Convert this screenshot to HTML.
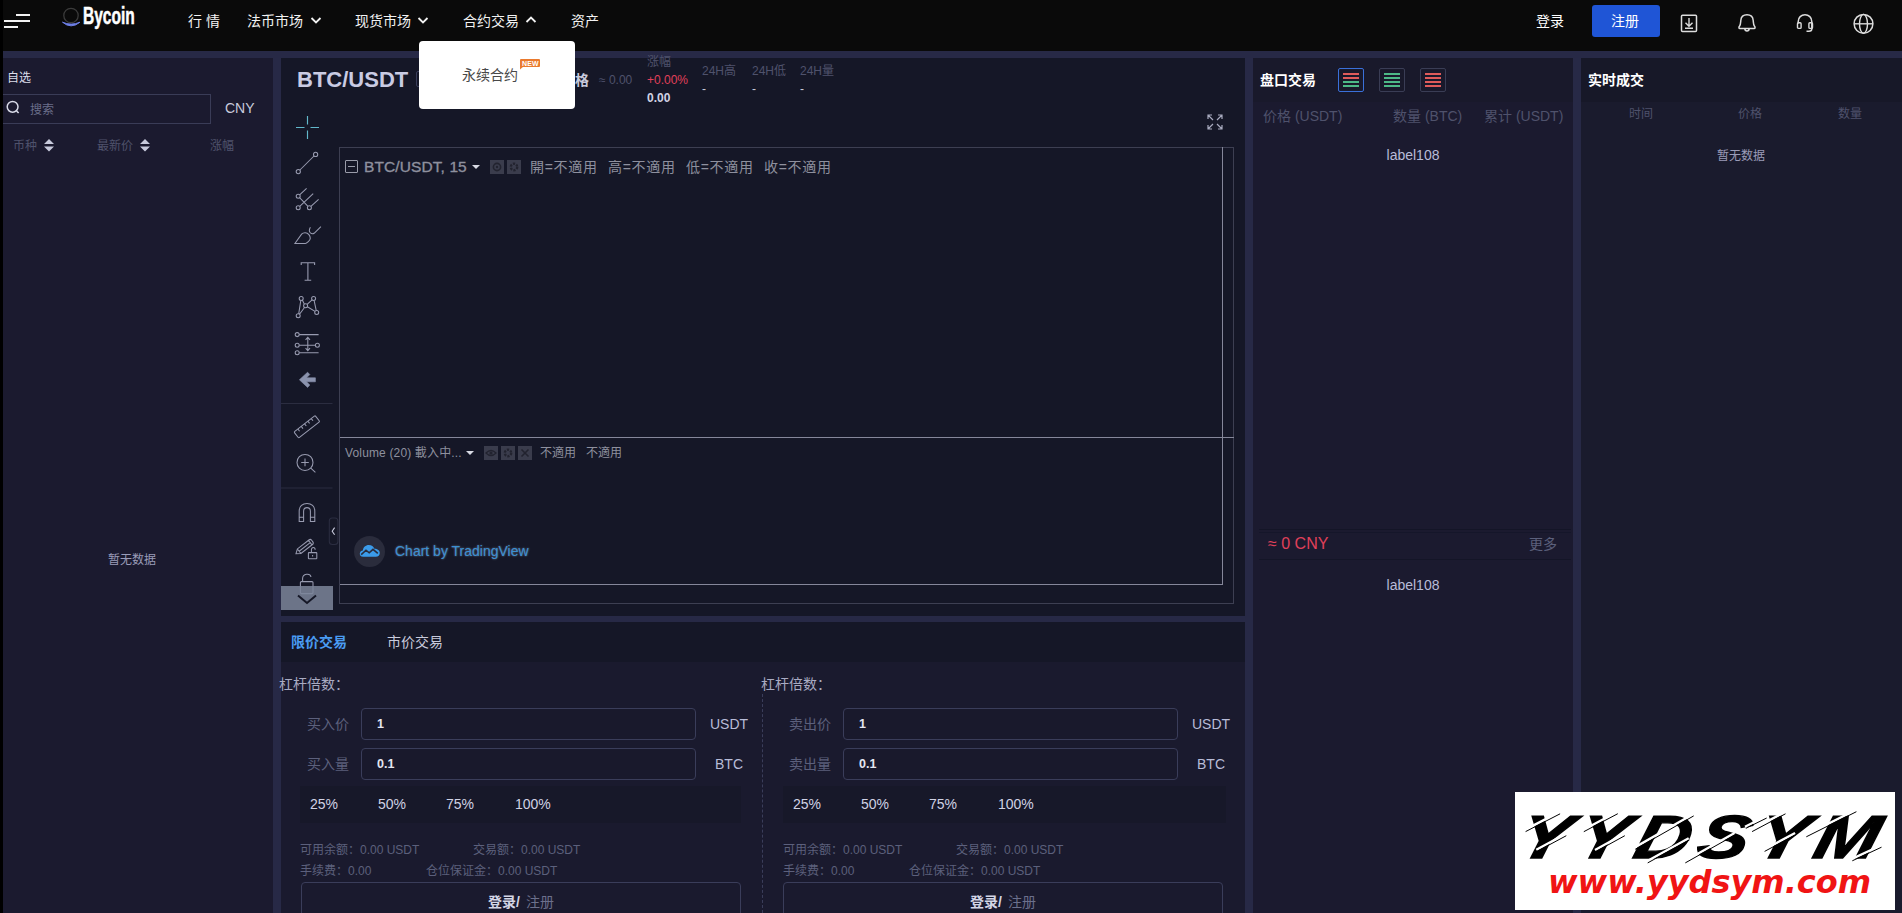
<!DOCTYPE html>
<html lang="zh-CN">
<head>
<meta charset="utf-8">
<title>Bycoin</title>
<style>
*{box-sizing:border-box;margin:0;padding:0}
html,body{width:1902px;height:913px;overflow:hidden;background:#272946}
body{position:relative;font-family:"Liberation Sans","Noto Sans CJK SC",sans-serif;font-size:12px;color:#c8cadc}
.a{position:absolute;white-space:nowrap}
.t{position:absolute;white-space:nowrap;line-height:20px;height:20px}
.p{position:absolute}
.b{font-weight:bold}
.f14{font-size:14px}
.f12{font-size:12px}
.dim{color:#4f526c}
.mid{color:#5c607c}
svg{position:absolute;overflow:visible}
/* panels */
#strip{left:0;top:0;width:3px;height:913px;background:#000}
#nav{left:3px;top:0;width:1899px;height:51px;background:#0a0a0a}
#left{left:3px;top:58px;width:270px;height:855px;background:#1b1a2f}
#cen{left:281px;top:58px;width:964px;height:558px;background:#151727}
#trade{left:281px;top:622px;width:964px;height:291px;background:#1a1a2e}
#tabs{left:281px;top:622px;width:964px;height:40px;background:#151727}
#ob{left:1253px;top:58px;width:320px;height:855px;background:#1b1a2f}
#rt{left:1581px;top:58px;width:321px;height:855px;background:#1a1b2d}
#rth{left:1581px;top:58px;width:321px;height:44px;background:#171828}
.inp{position:absolute;height:32px;width:335px;border:1px solid #3a3d5a;border-radius:4px;background:#19192c}
.pbar{position:absolute;height:37px;width:441px;background:#171829}
.lbtn{position:absolute;height:40px;width:440px;border:1px solid #3a3d5a;border-radius:4px}
</style>
</head>
<body>
<div class="p" id="nav"></div>
<div class="p" id="strip"></div>
<div class="p" id="left"></div>
<div class="p" id="cen"></div>
<div class="p" id="trade"></div>
<div class="p" id="tabs"></div>
<div class="p" id="ob"></div>
<div class="p" id="rt"></div>
<div class="p" id="rth"></div>
<div class="p" style="left:1253px;top:58px;width:320px;height:44px;background:#19192b"></div>

<!--NAV-->
<div class="p" style="left:16px;top:14px;width:14px;height:2px;background:#f2f2f2"></div>
<div class="p" style="left:4px;top:20px;width:26px;height:2px;background:#f2f2f2"></div>
<div class="p" style="left:4px;top:26px;width:14px;height:2px;background:#f2f2f2"></div>
<svg style="left:60px;top:5px" width="24" height="24" viewBox="0 0 24 24"><circle cx="11" cy="10.5" r="7.2" fill="none" stroke="#3b3b3b" stroke-width="1.3"/><path d="M2.5 17.2 Q11 24.5 20 17.2 Q11 21 2.5 17.2Z" fill="#6d7fe6" stroke="#6d7fe6" stroke-width="1"/></svg>
<div class="a b" style="left:82.5px;top:3px;font-size:23px;line-height:26px;color:#fff;-webkit-text-stroke:.5px #fff;transform:scaleX(.675);transform-origin:0 0">Bycoin</div>
<div class="t f14" style="left:188px;top:11px;color:#f2f2f2">行 情</div>
<div class="t f14" style="left:247px;top:11px;color:#f2f2f2">法币市场</div>
<svg style="left:310px;top:16px" width="12" height="9" viewBox="0 0 12 9"><path d="M1.5 2 L6 6.5 L10.5 2" fill="none" stroke="#f2f2f2" stroke-width="1.8"/></svg>
<div class="t f14" style="left:355px;top:11px;color:#f2f2f2">现货市场</div>
<svg style="left:417px;top:16px" width="12" height="9" viewBox="0 0 12 9"><path d="M1.5 2 L6 6.5 L10.5 2" fill="none" stroke="#f2f2f2" stroke-width="1.8"/></svg>
<div class="t f14" style="left:463px;top:11px;color:#f2f2f2">合约交易</div>
<svg style="left:525px;top:15px" width="12" height="9" viewBox="0 0 12 9"><path d="M1.5 7 L6 2.5 L10.5 7" fill="none" stroke="#f2f2f2" stroke-width="1.8"/></svg>
<div class="t f14" style="left:571px;top:11px;color:#f2f2f2">资产</div>
<div class="t f14" style="left:1536px;top:11px;color:#fff">登录</div>
<div class="p" style="left:1592px;top:5px;width:68px;height:32px;background:#1f55d6;border-radius:3px"></div>
<div class="t f14" style="left:1611px;top:11px;color:#fff">注册</div>
<svg style="left:1680px;top:14px" width="18" height="19" viewBox="0 0 18 19"><rect x="1.5" y="1.2" width="15" height="16.2" rx="1" fill="none" stroke="#dcdcdc" stroke-width="1.5"/><path d="M9 4 V12 M5.5 8.8 L9 12.3 L12.5 8.8 M5 14.3 H13" fill="none" stroke="#dcdcdc" stroke-width="1.4"/></svg>
<svg style="left:1737px;top:13px" width="20" height="20" viewBox="0 0 20 20"><path d="M3 15.5 C1.5 15.5 1.8 14 2.6 13 C3.6 11.6 3.6 10 3.8 7.5 C4.1 3.6 6.8 1.8 10 1.8 C13.2 1.8 15.9 3.6 16.2 7.5 C16.4 10 16.4 11.6 17.4 13 C18.2 14 18.5 15.5 17 15.5 Z M7.8 15.8 C8 17.3 9 17.9 10 17.9 C11 17.9 12 17.3 12.2 15.8" fill="none" stroke="#dcdcdc" stroke-width="1.5"/></svg>
<svg style="left:1795px;top:13px" width="20" height="20" viewBox="0 0 20 20"><path d="M3.2 10.5 V8.5 C3.2 4.5 6.2 1.8 10 1.8 C13.8 1.8 16.8 4.5 16.8 8.5 V16 C16.8 17.6 15.5 18.2 14 18.2 H11.5" fill="none" stroke="#dcdcdc" stroke-width="1.5"/><rect x="2.5" y="9.8" width="3.6" height="5.6" rx="1" fill="none" stroke="#dcdcdc" stroke-width="1.4"/><rect x="13.9" y="9.8" width="3.6" height="5.6" rx="1" fill="none" stroke="#dcdcdc" stroke-width="1.4"/></svg>
<svg style="left:1852px;top:12px" width="24" height="24" viewBox="0 0 24 24"><circle cx="11.5" cy="11.8" r="9.4" fill="none" stroke="#dcdcdc" stroke-width="1.5"/><ellipse cx="11.5" cy="11.8" rx="4" ry="9.4" fill="none" stroke="#dcdcdc" stroke-width="1.4"/><path d="M2.1 11.8 H20.9" stroke="#dcdcdc" stroke-width="1.4"/></svg>
<!--LEFT-->
<div class="t f12" style="left:7px;top:68px;color:#dcdeea">自选</div>
<div class="p" style="left:3px;top:94px;width:208px;height:30px;border:1px solid #3a3c57;border-left:none"></div>
<svg style="left:5px;top:99px" width="18" height="18" viewBox="0 0 18 18"><circle cx="7.6" cy="7.8" r="5.4" fill="none" stroke="#d8dae8" stroke-width="1.5"/><path d="M11.6 12 L13.6 14" stroke="#d8dae8" stroke-width="1.6"/></svg>
<div class="t f12" style="left:30px;top:100px;color:#6a6e8a">搜索</div>
<div class="t f14" style="left:225px;top:98px;color:#c8cadc">CNY</div>
<div class="t f12 dim" style="left:13px;top:136px">币种</div>
<svg style="left:43px;top:139px" width="12" height="13" viewBox="0 0 12 13"><path d="M1 5 L6 0 L11 5Z M1 7.5 L6 12.5 L11 7.5Z" fill="#c8cadc"/></svg>
<div class="t f12 dim" style="left:97px;top:136px">最新价</div>
<svg style="left:139px;top:139px" width="12" height="13" viewBox="0 0 12 13"><path d="M1 5 L6 0 L11 5Z M1 7.5 L6 12.5 L11 7.5Z" fill="#c8cadc"/></svg>
<div class="t f12 dim" style="left:210px;top:136px">涨幅</div>
<div class="t f12" style="left:108px;top:550px;color:#9a9cb8">暂无数据</div>
<!--CENTER-->
<div class="a b" style="left:297px;top:67px;font-size:22px;line-height:26px;color:#c9cbe3">BTC/USDT</div>
<div class="p" style="left:416px;top:71px;width:30px;height:16px;border:1px solid #3a3d5a;border-radius:2px"></div>
<div class="t f14 b" style="left:533px;top:70px;color:#c8cadc">最新价格</div>
<div class="t f12 dim" style="left:599px;top:70px">≈ 0.00</div>
<div class="t f12 dim" style="left:647px;top:52px">涨幅</div>
<div class="t f12" style="left:647px;top:70px;color:#e0405a">+0.00%</div>
<div class="t f12 b" style="left:647px;top:88px;color:#d0d2e4">0.00</div>
<div class="t f12 dim" style="left:702px;top:61px">24H高</div>
<div class="t f12 dim" style="left:752px;top:61px">24H低</div>
<div class="t f12 dim" style="left:800px;top:61px">24H量</div>
<div class="t f12" style="left:702px;top:79px;color:#c8cadc">-</div>
<div class="t f12" style="left:752px;top:79px;color:#c8cadc">-</div>
<div class="t f12" style="left:800px;top:79px;color:#c8cadc">-</div>
<!-- fullscreen -->
<svg style="left:1207px;top:114px" width="16" height="16" viewBox="0 0 16 16"><path d="M1 5 V1 H5 M1 1 L6 6 M11 1 H15 V5 M15 1 L10 6 M1 11 V15 H5 M1 15 L6 10 M15 11 V15 H11 M15 15 L10 10" fill="none" stroke="#a9abc0" stroke-width="1.2"/></svg>
<!-- chart frame -->
<div class="p" style="left:339px;top:147px;width:895px;height:457px;border:1px solid #3d3f52"></div>
<div class="p" style="left:1222px;top:147px;width:1px;height:438px;background:#85879a"></div>
<div class="p" style="left:340px;top:437px;width:894px;height:1px;background:#85879a"></div>
<div class="p" style="left:340px;top:584px;width:883px;height:1px;background:#85879a"></div>
<!-- legend row -->
<div class="p" style="left:345px;top:160px;width:13px;height:13px;border:1px solid #9a9caa;border-radius:1px"></div>
<div class="p" style="left:348px;top:166px;width:7px;height:1px;background:#9a9caa"></div>
<div class="a" style="left:364px;top:157px;font-size:15.5px;line-height:20px;color:#8e909e;-webkit-text-stroke:.35px #8e909e;letter-spacing:.1px">BTC/USDT, 15</div>
<svg style="left:471px;top:164px" width="10" height="6" viewBox="0 0 10 6"><path d="M1 1 H9 L5 5Z" fill="#d8dae4"/></svg>
<div class="p" style="left:490px;top:160px;width:14px;height:14px;background:#3a3c4c"></div>
<svg style="left:490px;top:160px" width="14" height="14" viewBox="0 0 14 14"><circle cx="7" cy="7" r="3.6" fill="none" stroke="#22232f" stroke-width="1.6"/><circle cx="7" cy="7" r="1.2" fill="#22232f"/></svg>
<div class="p" style="left:507px;top:160px;width:14px;height:14px;background:#3a3c4c"></div>
<svg style="left:507px;top:160px" width="14" height="14" viewBox="0 0 14 14"><circle cx="7" cy="7" r="3.2" fill="none" stroke="#22232f" stroke-width="2.4" stroke-dasharray="2.2 1.2"/></svg>
<div class="t f14" style="left:530px;top:157px;color:#8e909e;letter-spacing:.7px">開=不適用</div>
<div class="t f14" style="left:608px;top:157px;color:#8e909e;letter-spacing:.7px">高=不適用</div>
<div class="t f14" style="left:686px;top:157px;color:#8e909e;letter-spacing:.7px">低=不適用</div>
<div class="t f14" style="left:764px;top:157px;color:#8e909e;letter-spacing:.7px">收=不適用</div>
<!-- volume row -->
<div class="t f12" style="left:345px;top:443px;color:#8e909e;letter-spacing:.15px">Volume (20) 載入中...</div>
<svg style="left:465px;top:450px" width="10" height="6" viewBox="0 0 10 6"><path d="M1 1 H9 L5 5Z" fill="#d8dae4"/></svg>
<div class="p" style="left:484px;top:446px;width:14px;height:14px;background:#3a3c4c"></div>
<svg style="left:484px;top:446px" width="14" height="14" viewBox="0 0 14 14"><path d="M2 7 Q7 2 12 7 Q7 12 2 7Z" fill="none" stroke="#22232f" stroke-width="1.3"/><circle cx="7" cy="7" r="1.6" fill="#22232f"/></svg>
<div class="p" style="left:501px;top:446px;width:14px;height:14px;background:#3a3c4c"></div>
<svg style="left:501px;top:446px" width="14" height="14" viewBox="0 0 14 14"><circle cx="7" cy="7" r="3.2" fill="none" stroke="#22232f" stroke-width="2.4" stroke-dasharray="2.2 1.2"/></svg>
<div class="p" style="left:518px;top:446px;width:14px;height:14px;background:#3a3c4c"></div>
<svg style="left:518px;top:446px" width="14" height="14" viewBox="0 0 14 14"><path d="M3.5 3.5 L10.5 10.5 M10.5 3.5 L3.5 10.5" stroke="#22232f" stroke-width="1.6"/></svg>
<div class="t f12" style="left:540px;top:443px;color:#8e909e">不適用</div>
<div class="t f12" style="left:586px;top:443px;color:#8e909e">不適用</div>
<!-- tradingview -->
<div class="p" style="left:354px;top:536px;width:31px;height:31px;border-radius:50%;background:#2a2c3c"></div>
<svg style="left:359px;top:543px" width="22" height="16" viewBox="0 0 22 16"><path d="M4.2 13.8 C1.6 13.8 0.6 11.8 0.8 10.4 C1 8.8 2.2 7.6 3.8 7.6 C4.2 4.2 6.6 2 9.8 2 C12.6 2 14.6 3.6 15.4 5.8 C18.6 5.8 20.8 7.6 20.8 10 C20.8 12.2 19.2 13.8 16.8 13.8 Z" fill="#3b9be9"/><path d="M2.2 11.6 L7 7.2 L10.2 9.8 L14 6.4 L18.8 10.4" fill="none" stroke="#2a2c3c" stroke-width="1.6"/></svg>
<div class="t f14" style="left:395px;top:541px;color:#3a8fd2;text-shadow:0 0 2px rgba(190,215,240,.55)">Chart by TradingView</div>
<!-- toolbar -->
<!--TB-->
<svg style="left:281px;top:110px" width="60" height="505" viewBox="281 110 60 505" fill="none" stroke="#989bb0" stroke-width="1.05">
<!-- crosshair -->
<path d="M296 127.5 H304.5 M310.5 127.5 H319 M307.5 116 V124.5 M307.5 130.5 V139" stroke="#62b8cb" stroke-width="1.15"/>
<!-- line -->
<circle cx="298.3" cy="171.6" r="2.1"/><circle cx="315.6" cy="154.4" r="2.1"/><path d="M299.9 170 L314 156"/>
<!-- pitchfork -->
<circle cx="298.2" cy="196.2" r="2"/><circle cx="298.2" cy="207.8" r="2"/><circle cx="309.4" cy="207.8" r="2"/>
<path d="M299.6 194.8 L306.6 188.3 M299.7 206.4 L313.2 193.6 M310.9 206.4 L318.6 199.3 M299.6 197.7 L308 206.3"/>
<!-- brush -->
<path d="M294.9 243.5 L301.6 234.2 C303.4 232.3 307 232.3 308.9 234.6 C310.8 237 310.5 239.6 308.5 241.4 C307.2 242.6 306.4 243.5 305.4 243.5 Z"/>
<path d="M310.4 227.2 C309.3 229 308.9 231 310.1 232.5 C311.3 233.9 313 234.1 314.4 233 L320.9 226.6"/>
<!-- T -->
<path d="M301.2 265 V262.8 H314.6 V265 M307.9 262.8 V280 M304.6 280.2 H311.2" stroke-width="1.1"/>
<!-- pattern -->
<circle cx="301.2" cy="298.4" r="2"/><circle cx="313.6" cy="298.4" r="2"/><circle cx="305.6" cy="305.8" r="2"/><circle cx="298.2" cy="315.8" r="2"/><circle cx="316.7" cy="312.4" r="2"/>
<path d="M298.7 313.8 L300.8 300.4 M302.3 300.1 L304.4 304.2 M307.1 304.4 L312.1 299.8 M314.1 300.4 L316.2 310.4 M299.5 314.2 L304.5 307.5 M307.4 306.8 L315 311.4"/>
<!-- measure -->
<circle cx="297.2" cy="334.6" r="2"/><circle cx="297.2" cy="345.3" r="2"/><circle cx="297.2" cy="352.8" r="2"/><circle cx="317.4" cy="345.3" r="2"/>
<path d="M299.2 334.6 H318.6 M299.2 345.3 H315.4 M299.2 352.8 H318.6 M307.8 337.4 V350.4 M305.6 339.8 L307.8 337.2 L310 339.8 M305.6 348.2 L307.8 350.8 L310 348.2"/>
<!-- back arrow -->
<path d="M299.4 379.8 L307.6 372.2 L309.8 374.6 L306.6 377.8 H315.4 V381.8 H306.6 L309.8 385 L307.6 387.4 Z" fill="#8b93ae" stroke="#8b93ae" stroke-width=".6" stroke-linejoin="round"/>
<!-- separators -->
<path d="M281 403.5 H332.5 M281 488 H332.5" stroke="#2b2d40" stroke-width="1"/>
<!-- ruler -->
<g transform="translate(306.9 426.8) rotate(-38)"><rect x="-13.4" y="-3.8" width="26.8" height="7.6" rx="1"/><path d="M-8.5 -3.8 V-1 M-4.2 -3.8 V-1 M0 -3.8 V-1 M4.2 -3.8 V-1 M8.5 -3.8 V-1"/></g>
<!-- zoom -->
<circle cx="305" cy="462.4" r="8"/><path d="M301.2 462.4 H308.8 M305 458.6 V466.2 M310.8 468.2 L315.4 472.4"/>
<!-- magnet -->
<path d="M299.2 521.4 V511 C299.2 506.4 302.6 503.4 307 503.4 C311.4 503.4 314.8 506.4 314.8 511 V521.4 H310.4 V511.2 C310.4 509 309 507.6 307 507.6 C305 507.6 303.6 509 303.6 511.2 V521.4 Z M299.2 517.2 H303.6 M310.4 517.2 H314.8"/>
<!-- collapse handle -->
<rect x="329.3" y="518" width="8.6" height="26.4" rx="3" fill="#161827" stroke="#2b2d40"/>
<path d="M334.6 527.6 L332.2 531.2 L334.6 534.8" stroke="#c8cadc" stroke-width="1.1"/>
<!-- pencil + lock -->
<g transform="translate(304.2 547.3) rotate(-38)"><path d="M-10.4 0 L-6.4 -2.9 H8.2 C9.6 -2.9 10.2 -2 10.2 -1 V1 C10.2 2 9.6 2.9 8.2 2.9 H-6.4 Z M-6.4 -2.9 V2.9 M-6.4 0 H7.6 M7.6 -2.9 V2.9"/></g>
<rect x="308.4" y="552.6" width="8.4" height="6.2" rx=".6"/><path d="M311.4 552.6 V549.8 C311.4 546.6 315.2 546.8 315.2 549.8 M312.6 555 V556.6"/>
<!-- big lock -->
<path d="M302.6 581.6 V578.6 C302.6 573.4 310.2 573 311 577"/>
<rect x="300.4" y="581.6" width="12.6" height="12" rx="1"/>
</svg>
<div class="p" style="left:281px;top:586px;width:52px;height:24px;background:rgba(122,131,152,.86)"></div>
<svg style="left:296px;top:593px" width="22" height="12" viewBox="0 0 22 12"><path d="M2 2.4 L11 10 L20 2.4" fill="none" stroke="#161827" stroke-width="2"/></svg>
<!--TRADE-->
<div class="t f14 b" style="left:291px;top:632px;color:#4a9cf3">限价交易</div>
<div class="t f14" style="left:387px;top:632px;color:#c8cadc">市价交易</div>

<div class="t f14" style="left:279px;top:674px;color:#a9abc2">杠杆倍数：</div>
<div class="t f14 mid" style="left:307px;top:714px">买入价</div>
<div class="inp" style="left:361px;top:708px"></div>
<div class="t f12 b" style="left:377px;top:714px;color:#e4e6f2;font-size:12.5px">1</div>
<div class="t f14" style="left:710px;top:714px;color:#b8bcd8">USDT</div>
<div class="t f14 mid" style="left:307px;top:754px">买入量</div>
<div class="inp" style="left:361px;top:748px"></div>
<div class="t f12 b" style="left:377px;top:754px;color:#e4e6f2;font-size:12.5px">0.1</div>
<div class="t f14" style="left:715px;top:754px;color:#b8bcd8">BTC</div>
<div class="pbar" style="left:300px;top:786px"></div>
<div class="t f14" style="left:310px;top:794px;color:#d0d2e4">25%</div>
<div class="t f14" style="left:378px;top:794px;color:#d0d2e4">50%</div>
<div class="t f14" style="left:446px;top:794px;color:#d0d2e4">75%</div>
<div class="t f14" style="left:515px;top:794px;color:#d0d2e4">100%</div>
<div class="t f12 mid" style="left:300px;top:840px">可用余额：0.00 USDT</div>
<div class="t f12 mid" style="left:473px;top:840px">交易额：0.00 USDT</div>
<div class="t f12 mid" style="left:300px;top:861px">手续费：0.00</div>
<div class="t f12 mid" style="left:426px;top:861px">仓位保证金：0.00 USDT</div>
<div class="lbtn" style="left:301px;top:882px"></div>
<div class="t f14" style="left:488px;top:892px;color:#6c708c"><span class="b" style="color:#d4d6e6">登录/</span><span style="margin-left:6px">注册</span></div>

<div class="t f14" style="left:761px;top:674px;color:#a9abc2">杠杆倍数：</div>
<div class="t f14 mid" style="left:789px;top:714px">卖出价</div>
<div class="inp" style="left:843px;top:708px"></div>
<div class="t f12 b" style="left:859px;top:714px;color:#e4e6f2;font-size:12.5px">1</div>
<div class="t f14" style="left:1192px;top:714px;color:#b8bcd8">USDT</div>
<div class="t f14 mid" style="left:789px;top:754px">卖出量</div>
<div class="inp" style="left:843px;top:748px"></div>
<div class="t f12 b" style="left:859px;top:754px;color:#e4e6f2;font-size:12.5px">0.1</div>
<div class="t f14" style="left:1197px;top:754px;color:#b8bcd8">BTC</div>
<div class="pbar" style="left:783px;top:786px;width:443px"></div>
<div class="t f14" style="left:793px;top:794px;color:#d0d2e4">25%</div>
<div class="t f14" style="left:861px;top:794px;color:#d0d2e4">50%</div>
<div class="t f14" style="left:929px;top:794px;color:#d0d2e4">75%</div>
<div class="t f14" style="left:998px;top:794px;color:#d0d2e4">100%</div>
<div class="t f12 mid" style="left:783px;top:840px">可用余额：0.00 USDT</div>
<div class="t f12 mid" style="left:956px;top:840px">交易额：0.00 USDT</div>
<div class="t f12 mid" style="left:783px;top:861px">手续费：0.00</div>
<div class="t f12 mid" style="left:909px;top:861px">仓位保证金：0.00 USDT</div>
<div class="lbtn" style="left:783px;top:882px"></div>
<div class="t f14" style="left:970px;top:892px;color:#6c708c"><span class="b" style="color:#d4d6e6">登录/</span><span style="margin-left:6px">注册</span></div>

<div class="p" style="left:762px;top:694px;width:0;height:219px;border-left:1px dashed #3a3d5a"></div>
<!--OB-->
<div class="t f14 b" style="left:1260px;top:70px;color:#fff">盘口交易</div>
<div class="p" style="left:1338px;top:68px;width:26px;height:24px;border:1px solid #3a70da;border-radius:2px"></div>
<div class="p" style="left:1379px;top:68px;width:26px;height:24px;border:1px solid #3a3d55;border-radius:2px"></div>
<div class="p" style="left:1420px;top:68px;width:26px;height:24px;border:1px solid #3a3d55;border-radius:2px"></div>
<svg style="left:1338px;top:68px" width="110" height="24" viewBox="0 0 110 24"><path d="M5 6 H21 M5 10 H21" stroke="#e05b5b" stroke-width="2"/><path d="M5 14 H21 M5 18 H21" stroke="#4db987" stroke-width="2"/><path d="M46 6 H62 M46 10 H62 M46 14 H62 M46 18 H62" stroke="#4db987" stroke-width="2"/><path d="M87 6 H103 M87 10 H103 M87 14 H103 M87 18 H103" stroke="#e05b5b" stroke-width="2"/></svg>
<div class="t f14 dim" style="left:1263px;top:106px">价格 (USDT)</div>
<div class="t f14 dim" style="left:1393px;top:106px">数量 (BTC)</div>
<div class="t f14 dim" style="left:1484px;top:106px">累计 (USDT)</div>
<div class="t f14" style="left:1313px;top:145px;width:200px;text-align:center;color:#b8bcd8">label108</div>
<div class="p" style="left:1259px;top:529px;width:312px;height:1px;background:#141527"></div>
<div class="p" style="left:1259px;top:532px;width:312px;height:1px;background:#15162a"></div>
<div class="p" style="left:1259px;top:559px;width:312px;height:1px;background:#141527"></div>
<div class="t" style="left:1268px;top:534px;font-size:16px;color:#e0405a">≈ 0 CNY</div>
<div class="t f14 mid" style="left:1529px;top:534px">更多</div>
<div class="t f14" style="left:1313px;top:575px;width:200px;text-align:center;color:#b8bcd8">label108</div>
<!--RT-->
<div class="t f14 b" style="left:1588px;top:70px;color:#fff">实时成交</div>
<div class="t f12 dim" style="left:1629px;top:104px">时间</div>
<div class="t f12 dim" style="left:1738px;top:104px">价格</div>
<div class="t f12 dim" style="left:1838px;top:104px">数量</div>
<div class="t f12" style="left:1717px;top:146px;color:#9a9cb8">暂无数据</div>
<!--WM-->
<div class="p" style="left:1515px;top:792px;width:380px;height:118px;background:#fff;overflow:hidden">
<div class="a" id="yy" style="left:-3px;top:15px;-webkit-text-stroke:1.3px #000;font:italic bold 61px/61px 'Liberation Sans',sans-serif;color:#000;letter-spacing:6px;transform:scaleX(1.25) skewX(-12deg);transform-origin:0 100%">YYDSYM</div>
<svg style="left:0;top:0" width="380" height="118" viewBox="0 0 380 118"><path d="M9.8 37.9 L44.3 20.1 M21.3 57.7 L50.5 42.0 M68.0 38.0 L102.0 20.0 M80.0 58.0 L109.0 42.0 M119.4 55.6 L177.9 22.2 M131.9 69.2 L173.7 46.2 M169.5 69.2 L219.6 41.0 M230.0 34.7 L250.9 24.3 M236.3 37.9 L269.7 20.1 M248.8 57.7 L280.1 41.0 M290.5 43.1 L340.6 18.0 M336.5 67.1 L365.7 53.5" stroke="#fff" stroke-width="2.4" fill="none"/><path d="M10.6 39.6 L45.1 21.8 M22.1 59.4 L51.3 43.7 M68.8 39.7 L102.8 21.7 M80.8 59.7 L109.8 43.7 M120.2 57.3 L178.7 23.9 M132.7 70.9 L174.5 47.9 M170.3 70.9 L220.4 42.7 M230.8 36.4 L251.7 26.0 M237.1 39.6 L270.5 21.8 M249.6 59.4 L280.9 42.7 M291.3 44.8 L341.4 19.7 M337.3 68.8 L366.5 55.2" stroke="#000" stroke-width="1" fill="none"/></svg>
<div class="a" id="ww" style="left:33px;top:70px;font:oblique bold 32px/40px 'DejaVu Sans','Liberation Sans',sans-serif;color:#f01414;transform:scaleX(1.0);transform-origin:0 50%">www.yydsym.com</div>
</div>
<div class="p" style="left:419px;top:41px;width:156px;height:68px;background:#fff;border-radius:4px"></div>
<div class="t f14" style="left:462px;top:65px;color:#484848">永续合约</div>
<div class="p" style="left:520px;top:59px;width:20px;height:8px;background:#ea7a2e;border-radius:1px"></div>
<svg style="left:520px;top:66px" width="5" height="4" viewBox="0 0 5 4"><path d="M0 0 H4 L0 3.5Z" fill="#ea7a2e"/></svg>
<div class="a b" style="left:522px;top:59.5px;font-size:7px;line-height:8px;color:#fff;letter-spacing:.2px">NEW</div>
</body>
</html>
